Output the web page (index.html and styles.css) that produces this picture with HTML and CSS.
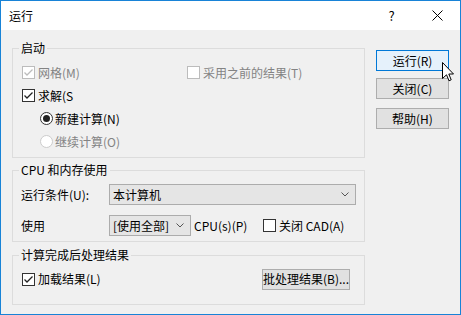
FILE: index.html
```html
<!DOCTYPE html>
<html>
<head>
<meta charset="utf-8">
<link rel="stylesheet" href="styles.css">
</head>
<body>
<div class="win">
  <div class="titlebar">
    <span class="title">运行</span>
    <span class="tb-btn help">?</span>
    <span class="tb-btn close"><svg width="11" height="11" viewBox="0 0 11 11"><path d="M0.5 0.5 L10.5 10.5 M10.5 0.5 L0.5 10.5" stroke="#000" stroke-width="1" fill="none"/></svg></span>
  </div>
  <div class="content">
    <div class="groups">
      <fieldset class="grp g1">
        <legend>启动</legend>
        <div class="row r-top">
          <label class="chk dis"><span class="cb"><svg width="11" height="11" viewBox="0 0 11 11"><polyline points="1.5,5.5 4,8 9.5,2.5" fill="none" stroke="#bcbcbc" stroke-width="1.3"/></svg></span>网格(M)</label>
          <label class="chk dis"><span class="cb"></span>采用之前的结果(T)</label>
        </div>
        <div class="row">
          <label class="chk"><span class="cb"><svg width="11" height="11" viewBox="0 0 11 11"><polyline points="1.5,5.5 4,8 9.5,2.5" fill="none" stroke="#222" stroke-width="1.3"/></svg></span>求解(S</label>
        </div>
        <div class="row indent">
          <label class="chk"><span class="rb on"><span class="dot"></span></span>新建计算(N)</label>
        </div>
        <div class="row indent">
          <label class="chk dis"><span class="rb"></span>继续计算(O)</label>
        </div>
      </fieldset>

      <fieldset class="grp g2">
        <legend>CPU 和内存使用</legend>
        <div class="frow">
          <span class="lbl">运行条件(U):</span>
          <div class="sel wide"><span>本计算机</span><svg class="chev" width="8" height="5" viewBox="0 0 8 5"><polyline points="0.5,0.5 4,4 7.5,0.5" fill="none" stroke="#555" stroke-width="1"/></svg></div>
        </div>
        <div class="frow second">
          <span class="lbl">使用</span>
          <div class="sel small"><span>[使用全部]</span><svg class="chev" width="8" height="5" viewBox="0 0 8 5"><polyline points="0.5,0.5 4,4 7.5,0.5" fill="none" stroke="#555" stroke-width="1"/></svg></div>
          <span class="cpu">CPU(s)(P)</span>
          <label class="chk"><span class="cb"></span>关闭 CAD(A)</label>
        </div>
      </fieldset>

      <fieldset class="grp g3">
        <legend>计算完成后处理结果</legend>
        <div class="brow">
          <label class="chk"><span class="cb"><svg width="11" height="11" viewBox="0 0 11 11"><polyline points="1.5,5.5 4,8 9.5,2.5" fill="none" stroke="#222" stroke-width="1.3"/></svg></span>加载结果(L)</label>
          <button class="btn batch">批处理结果(B)...</button>
        </div>
      </fieldset>
    </div>
    <div class="buttons">
      <button class="btn default">运行(R)</button>
      <button class="btn b2">关闭(C)</button>
      <button class="btn b3">帮助(H)</button>
    </div>
  </div>
  <svg class="cursor" width="13" height="21" viewBox="0 0 13 21"><path d="M0.5 0.5 L0.5 16.5 L4.5 12.8 L7 18.8 L9.2 17.8 L6.8 12 L11.5 12 Z" fill="#fff" stroke="#000" stroke-width="1" stroke-linejoin="miter"/></svg>
</div>
</body>
</html>
```

FILE: styles.css
```css
* { box-sizing: border-box; }
html, body { margin: 0; padding: 0; background: #f0f0f0; }
body {
  font-family: "Noto Sans CJK SC", "Noto Sans", sans-serif;
  font-size: 12px;
  color: #000;
}
.win {
  position: relative;
  width: 461px;
  height: 315px;
  border: 1px solid #1883d7;
  background: #f0f0f0;
  overflow: hidden;
}
.titlebar {
  height: 29px;
  background: #fff;
  display: flex;
  align-items: center;
  padding-left: 8px;
}
.title { flex: 1; font-size: 12px; line-height: 16px; }
.tb-btn {
  width: 46px;
  height: 29px;
  display: flex;
  align-items: center;
  justify-content: center;
}
.help { font-size: 13px; padding-left: 1px; padding-bottom: 1px; }
.close svg { display: block; margin-left: 1px; }

.content {
  display: flex;
  gap: 11px;
  padding: 10px 0 0 11px;
}
.groups { width: 353px; display: flex; flex-direction: column; }
.grp {
  margin: 0;
  border: 1px solid #dcdcdc;
  padding: 0 8px 0 9px;
  min-width: 0;
}
.grp legend {
  padding: 0 2px;
  margin-left: -3px;
  line-height: 16px;
  height: 16px;
}
.g1 { padding-top: 5px; padding-bottom: 4px; }
.g2 { margin-top: 4px; padding-top: 6px; padding-bottom: 5px; }
.g3 { margin-top: 5px; padding-top: 5px; padding-bottom: 14px; }

.row { height: 23px; display: flex; align-items: center; }
.r-top { display: grid; grid-template-columns: 165px auto; align-items: center; }
.indent { padding-left: 18px; }

.chk { display: flex; align-items: center; line-height: 16px; }
.dis { color: #838383; }
.cb {
  width: 13px;
  height: 13px;
  border: 1px solid #333;
  background: #fff;
  margin-right: 3px;
  display: flex;
  align-items: center;
  justify-content: center;
  flex: none;
}
.cb svg { display: block; }
.dis .cb { border-color: #bcbcbc; }
.rb {
  width: 13px;
  height: 13px;
  border-radius: 50%;
  border: 1px solid #ccc;
  background: #fff;
  margin-right: 2px;
  display: flex;
  align-items: center;
  justify-content: center;
  flex: none;
}
.rb.on { border-color: #333; }
.dot { width: 7px; height: 7px; border-radius: 50%; background: #222; }

.frow { display: flex; align-items: center; height: 21px; }
.frow.second { margin-top: 10px; }
.lbl { width: 87px; margin-left: -1px; margin-right: 1px; line-height: 16px; }
.sel {
  height: 21px;
  border: 1px solid #acacac;
  background: #e5e5e5;
  display: flex;
  align-items: center;
  justify-content: space-between;
  padding: 0 6px 0 3px;
  line-height: 16px;
}
.sel.wide { width: 247px; }
.sel.small { width: 82px; }
.chev { display: block; }
.cpu { width: 72px; padding-left: 3px; line-height: 16px; }

.brow { display: grid; grid-template-columns: 240px 88px; align-items: center; height: 22px; }

.btn {
  font-family: inherit;
  font-size: 12px;
  color: #000;
  height: 21px;
  border: 1px solid #adadad;
  background: #e1e1e1;
  padding: 0;
  line-height: 16px;
  margin: 0;
}
.batch { width: 88px; }
.buttons { display: flex; flex-direction: column; padding-top: 10px; }
.buttons .btn { width: 73px; }
.btn.default { border-color: #0078d7; background: #e5f1fb; }
.b2 { margin-top: 7px; }
.b3 { margin-top: 9px; }

.cursor { position: absolute; left: 441px; top: 61px; }
```
